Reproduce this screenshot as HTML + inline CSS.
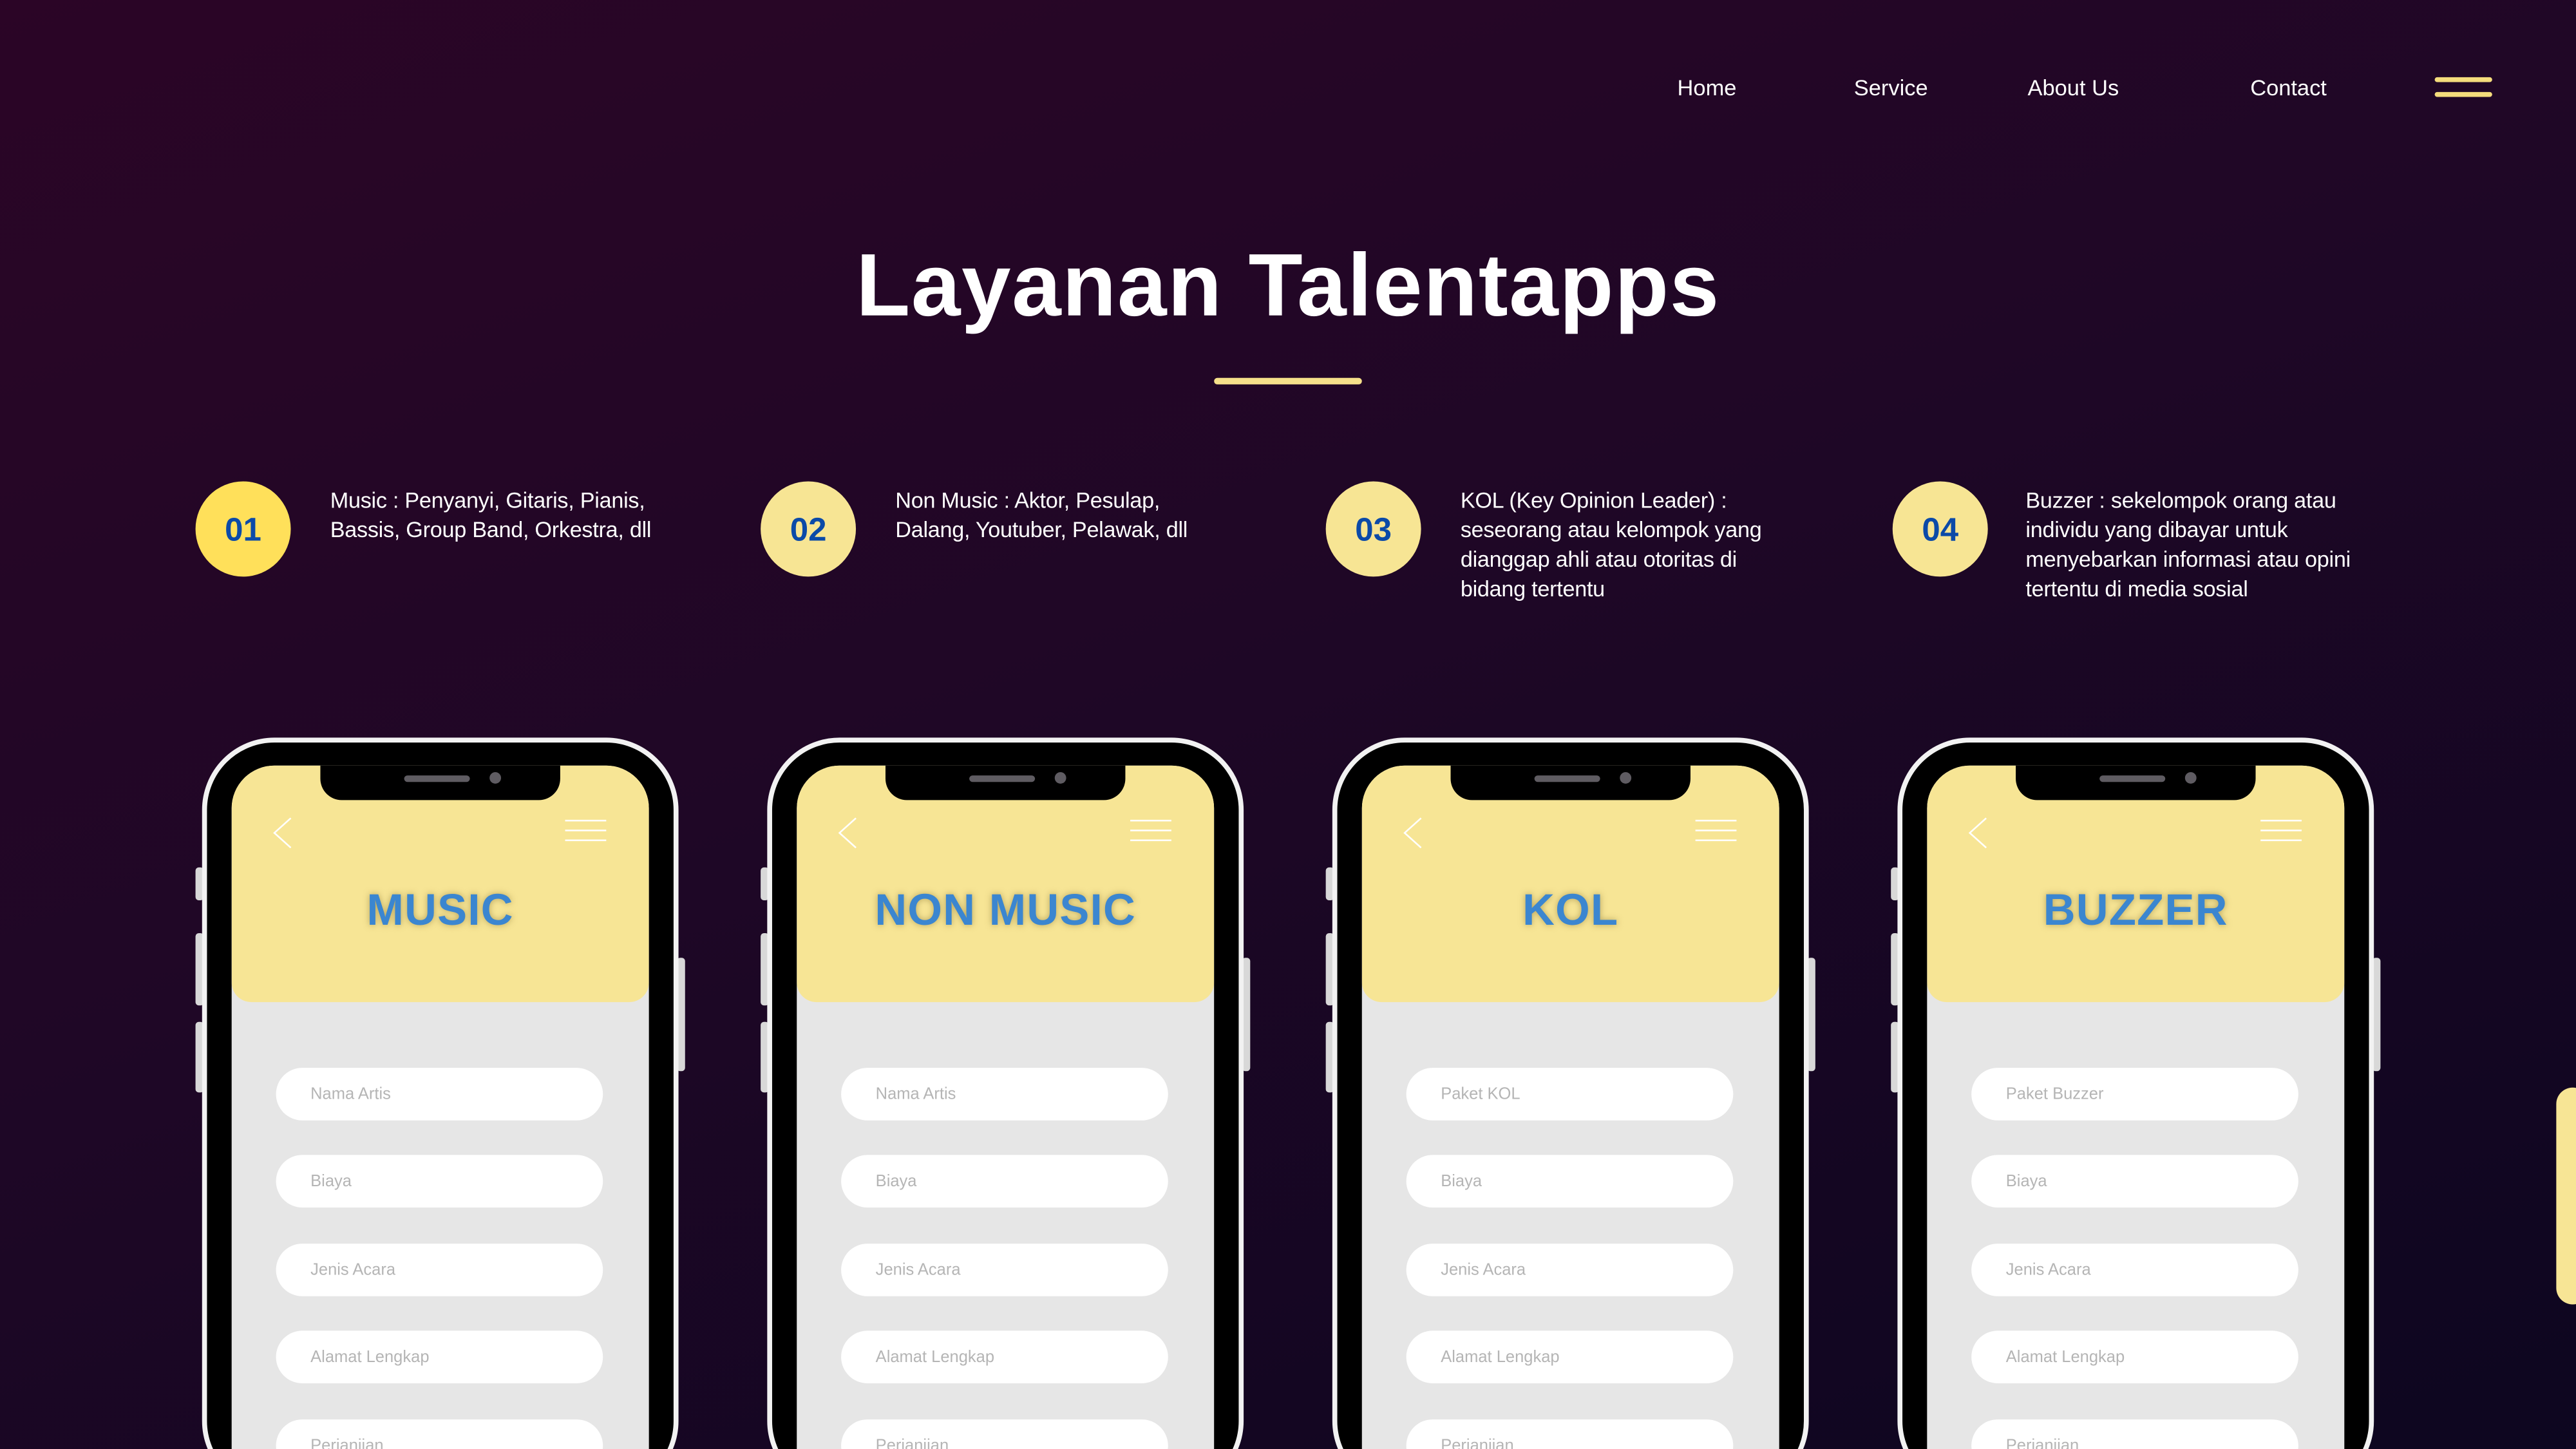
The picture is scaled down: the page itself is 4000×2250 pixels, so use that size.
<!DOCTYPE html>
<html><head><meta charset="utf-8"><style>
*{margin:0;padding:0;box-sizing:border-box}
html,body{width:4000px;height:2250px;overflow:hidden;background:#1a0622}
#s{position:absolute;left:0;top:0;width:1568px;height:882px;overflow:hidden;transform:scale(2.5510);transform-origin:0 0;font-family:"Liberation Sans",sans-serif;color:#fff;background:linear-gradient(160deg,#2b0526 0%,#1f0726 45%,#0d0620 100%)}
.nav{position:absolute;top:46px;font-size:13.5px;transform:translateX(-50%);white-space:nowrap}
.hb{position:absolute;left:1482px;width:35px;height:3px;background:#f4dc7c;border-radius:2px}
h1{position:absolute;left:0;width:1568px;top:143px;text-align:center;font-size:54px;font-weight:bold;letter-spacing:0.6px}
.ul{position:absolute;left:739px;top:230px;width:90px;height:4px;background:#f5e08a;border-radius:2px}
.c{position:absolute;top:293px;width:58px;height:58px;border-radius:50%;background:#f7e594;color:#0b4aa8;font-weight:bold;font-size:20px;text-align:center;line-height:60px}
.t{position:absolute;top:296px;font-size:13.4px;line-height:18px;width:205px;letter-spacing:-0.1px}
.ph{position:absolute;top:449px;width:290px;height:460px}
.ob{position:absolute;left:0;top:0;width:290px;height:460px;border:3px solid #f2f2f2;border-radius:44px;background:#000}
.sc{position:absolute;left:18px;top:17px;width:254px;height:460px;background:#e6e6e6;border-radius:26px 26px 0 0;overflow:hidden}
.hd{position:absolute;left:0;top:0;width:254px;height:144px;background:#f7e595;border-radius:0 0 12px 12px}
.no{position:absolute;left:72px;top:17px;width:146px;height:21px;background:#000;border-radius:0 0 13px 13px}
.sp{position:absolute;left:123px;top:23px;width:40px;height:4px;background:#5f5c62;border-radius:2px}
.dt{position:absolute;left:175px;top:21px;width:7px;height:7px;background:#5f5c62;border-radius:50%}
.sb{position:absolute;width:5px;background:#d8d8d8;border-radius:2px}
.ti{position:absolute;left:0;width:254px;top:73px;text-align:center;font-size:27px;font-weight:bold;color:#3b86d0;text-shadow:0 0 4px rgba(120,100,40,.5);letter-spacing:0.5px}
.in{position:absolute;left:27px;width:199px;height:32px;background:#fff;border-radius:16px;font-size:10px;color:#b5b5b5;padding-left:21px;line-height:34px}
.mn{position:absolute;left:203px;width:25px;height:1px;background:#fff}
</style></head><body><div id="s">
<div class="nav" style="left:1039px">Home</div>
<div class="nav" style="left:1151px">Service</div>
<div class="nav" style="left:1262px">About Us</div>
<div class="nav" style="left:1393px">Contact</div>
<div class="hb" style="top:47px"></div><div class="hb" style="top:56px"></div>
<h1>Layanan Talentapps</h1>
<div class="ul"></div>

<div class="c" style="left:119px;background:#ffe05a">01</div>
<div class="t" style="left:201px;width:215px">Music : Penyanyi, Gitaris, Pianis, Bassis, Group Band, Orkestra, dll</div>
<div class="c" style="left:463px">02</div>
<div class="t" style="left:545px;width:190px">Non Music : Aktor, Pesulap, Dalang, Youtuber, Pelawak, dll</div>
<div class="c" style="left:807px">03</div>
<div class="t" style="left:889px;width:200px">KOL (Key Opinion Leader) : seseorang atau kelompok yang dianggap ahli atau otoritas di bidang tertentu</div>
<div class="c" style="left:1152px">04</div>
<div class="t" style="left:1233px;width:198px">Buzzer : sekelompok orang atau individu yang dibayar untuk menyebarkan informasi atau opini tertentu di media sosial</div>

<div class="ph" style="left:123px">
<div class="sb" style="left:-4px;top:79px;height:20px"></div><div class="sb" style="left:-4px;top:119px;height:44px"></div><div class="sb" style="left:-4px;top:173px;height:43px"></div><div class="sb" style="left:289px;top:134px;height:69px"></div>
<div class="ob"></div><div class="sc"><div class="hd"><svg style="position:absolute;left:24px;top:31px" width="14" height="20"><path d="M12 1 L2 10 L12 19" stroke="#fff" fill="none" stroke-width="1"/></svg><div class="mn" style="top:33px"></div><div class="mn" style="top:39px"></div><div class="mn" style="top:45px"></div><div class="ti">MUSIC</div></div>
<div class="in" style="top:184px">Nama Artis</div><div class="in" style="top:237px">Biaya</div><div class="in" style="top:291px">Jenis Acara</div><div class="in" style="top:344px">Alamat Lengkap</div><div class="in" style="top:398px">Perjanjian</div></div>
<div class="no"></div><div class="sp"></div><div class="dt"></div></div>

<div class="ph" style="left:467px">
<div class="sb" style="left:-4px;top:79px;height:20px"></div><div class="sb" style="left:-4px;top:119px;height:44px"></div><div class="sb" style="left:-4px;top:173px;height:43px"></div><div class="sb" style="left:289px;top:134px;height:69px"></div>
<div class="ob"></div><div class="sc"><div class="hd"><svg style="position:absolute;left:24px;top:31px" width="14" height="20"><path d="M12 1 L2 10 L12 19" stroke="#fff" fill="none" stroke-width="1"/></svg><div class="mn" style="top:33px"></div><div class="mn" style="top:39px"></div><div class="mn" style="top:45px"></div><div class="ti">NON MUSIC</div></div>
<div class="in" style="top:184px">Nama Artis</div><div class="in" style="top:237px">Biaya</div><div class="in" style="top:291px">Jenis Acara</div><div class="in" style="top:344px">Alamat Lengkap</div><div class="in" style="top:398px">Perjanjian</div></div>
<div class="no"></div><div class="sp"></div><div class="dt"></div></div>

<div class="ph" style="left:811px">
<div class="sb" style="left:-4px;top:79px;height:20px"></div><div class="sb" style="left:-4px;top:119px;height:44px"></div><div class="sb" style="left:-4px;top:173px;height:43px"></div><div class="sb" style="left:289px;top:134px;height:69px"></div>
<div class="ob"></div><div class="sc"><div class="hd"><svg style="position:absolute;left:24px;top:31px" width="14" height="20"><path d="M12 1 L2 10 L12 19" stroke="#fff" fill="none" stroke-width="1"/></svg><div class="mn" style="top:33px"></div><div class="mn" style="top:39px"></div><div class="mn" style="top:45px"></div><div class="ti">KOL</div></div>
<div class="in" style="top:184px">Paket KOL</div><div class="in" style="top:237px">Biaya</div><div class="in" style="top:291px">Jenis Acara</div><div class="in" style="top:344px">Alamat Lengkap</div><div class="in" style="top:398px">Perjanjian</div></div>
<div class="no"></div><div class="sp"></div><div class="dt"></div></div>

<div class="ph" style="left:1155px">
<div class="sb" style="left:-4px;top:79px;height:20px"></div><div class="sb" style="left:-4px;top:119px;height:44px"></div><div class="sb" style="left:-4px;top:173px;height:43px"></div><div class="sb" style="left:289px;top:134px;height:69px"></div>
<div class="ob"></div><div class="sc"><div class="hd"><svg style="position:absolute;left:24px;top:31px" width="14" height="20"><path d="M12 1 L2 10 L12 19" stroke="#fff" fill="none" stroke-width="1"/></svg><div class="mn" style="top:33px"></div><div class="mn" style="top:39px"></div><div class="mn" style="top:45px"></div><div class="ti">BUZZER</div></div>
<div class="in" style="top:184px">Paket Buzzer</div><div class="in" style="top:237px">Biaya</div><div class="in" style="top:291px">Jenis Acara</div><div class="in" style="top:344px">Alamat Lengkap</div><div class="in" style="top:398px">Perjanjian</div></div>
<div class="no"></div><div class="sp"></div><div class="dt"></div></div>

<div style="position:absolute;left:1556px;top:662px;width:20px;height:132px;background:#f7e595;border-radius:11px"></div>
</div></body></html>
